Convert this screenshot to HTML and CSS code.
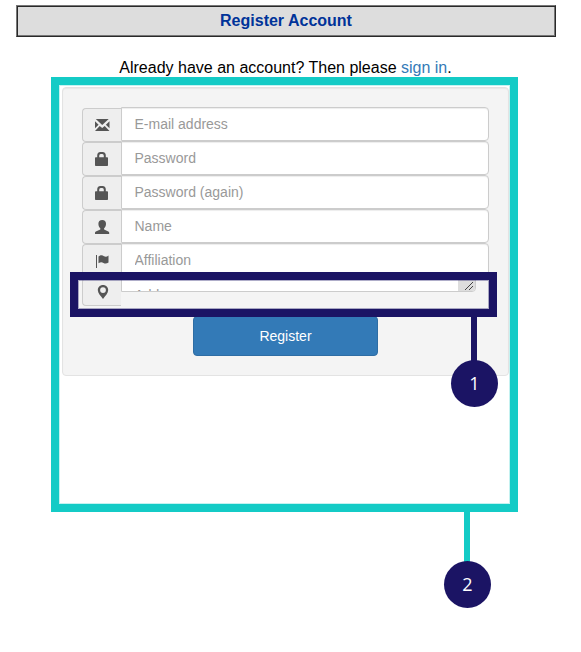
FILE: index.html
```html
<!DOCTYPE html>
<html lang="en">
<head>
<meta charset="utf-8">
<title>Register Account</title>
<link rel="stylesheet" href="styles.css">
</head>
<body>
<main class="page">
  <h1 class="title">Register Account</h1>
  <p class="signin">Already have an account? Then please <a href="#">sign in</a>.</p>
  <form class="panel">
    <div class="row">
      <span class="addon"><svg width="16" height="14" viewBox="0 0 16 14"><path d="M1.800 1h12.900L8.200 7zM1 3.200L4.600 6.700 1 10.200zM15.500 3.200L11.900 6.700l3.600 3.500zM5.700 8l2.500 2 2.500-2 4.800 5H1z"/></svg></span>
      <input class="field" type="text" placeholder="E-mail address">
    </div>
    <div class="row">
      <span class="addon"><svg width="16" height="14" viewBox="0 0 16 14"><path fill-rule="evenodd" d="M1 6q0-.8.8-.8h1.400V3.500Q3.200 0 6.400 0h2.200q3.200 0 3.200 3.500v1.700h1.400q.8 0 .8.800v7.200q0 .8-.8.8H1.800q-.8 0-.8-.8zM5.200 5.200h4.600V3.700q0-1.700-1.500-1.700H6.700q-1.500 0-1.500 1.700z"/></svg></span>
      <input class="field" type="text" placeholder="Password">
    </div>
    <div class="row">
      <span class="addon"><svg width="16" height="14" viewBox="0 0 16 14"><path fill-rule="evenodd" d="M1 6q0-.8.8-.8h1.400V3.500Q3.200 0 6.400 0h2.200q3.200 0 3.200 3.500v1.700h1.400q.8 0 .8.800v7.200q0 .8-.8.8H1.800q-.8 0-.8-.8zM5.200 5.200h4.600V3.700q0-1.700-1.500-1.700H6.700q-1.500 0-1.500 1.700z"/></svg></span>
      <input class="field" type="text" placeholder="Password (again)">
    </div>
    <div class="row">
      <span class="addon"><svg width="16" height="14" viewBox="0 0 16 14"><path d="M8.200 0c2.500 0 3.800 1.400 3.800 3.800 0 2-.8 3.500-1.900 4.500v1.200l4.200 2q.9.500.9 1.200V14H1v-1.300q0-.7.9-1.200l4.400-2V8.300C5.200 7.300 4.400 5.800 4.400 3.800 4.400 1.400 5.700 0 8.200 0z"/></svg></span>
      <input class="field" type="text" placeholder="Name">
    </div>
    <div class="row">
      <span class="addon"><svg width="16" height="14" viewBox="0 0 16 14"><path d="M2 1h1v13H2zM4.500 2.500c2.300-1.800 4-1.200 5.500-.3 1.500.8 2.800.6 4.500-.7v7c-1.800 1.300-3.500 1.300-5 .5-1.700-1-3-.9-5 .3z"/></svg></span>
      <input class="field" type="text" placeholder="Affiliation">
    </div>
    <div class="row row-address">
      <span class="addon"><svg width="16" height="14" viewBox="0 0 16 14"><path fill-rule="evenodd" d="M9 0c3 0 5.200 2.200 5.200 5 0 3-2.700 5.700-5.200 9-2.500-3.300-5.200-6-5.200-9C3.800 2.200 6 0 9 0zm0 2.200A2.900 2.900 0 1 0 9 8a2.900 2.900 0 0 0 0-5.800z"/></svg></span>
      <div class="address"><span>Address</span><svg class="grip" width="17" height="13" viewBox="0 0 17 13"><path d="M7 12l8-8M11 12l4-4"/></svg></div>
    </div>
    <button class="submit" type="button">Register</button>
  </form>
  <div class="frame frame-form"></div>
  <div class="frame frame-address"></div>
  <div class="stem stem-one"></div>
  <div class="badge badge-one">1</div>
  <div class="stem stem-two"></div>
  <div class="badge badge-two">2</div>
</main>
</body>
</html>
```
FILE: styles.css
```css
* { box-sizing: border-box; }
body {
  margin: 0;
  background: #fff;
  color: #000;
  font: 16px/20px "Liberation Sans", Arial, sans-serif;
}
.page {
  position: relative;
  height: 652px;
  padding: 5px 25px 0 16px;
  overflow: hidden;
}
.title {
  height: 32px;
  margin: 0;
  padding-top: 5px;
  border: 1px solid;
  border-color: #777 #292929 #292929 #777;
  box-shadow: inset 1px 1px #292929, inset -1px -1px #777;
  background: #ddd;
  color: #003399;
  font-size: 16px;
  line-height: 20px;
  text-align: center;
}
.signin {
  margin: 21px 0 0;
  padding-right: 1px;
  text-align: center;
}
.signin a { color: #337ab7; text-decoration: none; }
.panel {
  width: 447px;
  height: 289px;
  margin: 9px 0 0 46px;
  padding: 19px 19px 0 19px;
  border: 1px solid #e3e3e3;
  border-radius: 4px;
  background: #f4f4f4;
  box-shadow: inset 0 1px 1px rgba(0, 0, 0, .05);
}
.row { display: flex; height: 34px; }
.addon {
  display: flex;
  align-items: center;
  justify-content: center;
  width: 39px;
  height: 34px;
  margin-top: 1px;
  border: 1px solid #ccc;
  border-right: 0;
  border-radius: 4px 0 0 4px;
  background: #eee;
}
.addon svg { fill: #555; }
.field {
  width: 368px;
  height: 34px;
  margin: 0;
  padding: 6px 12px 6px 12.5px;
  border: 1px solid #ccc;
  border-radius: 0 4px 4px 0;
  background: #fff;
  box-shadow: inset 0 1px 1px rgba(0, 0, 0, .075);
  font: 14px/20px "Liberation Sans", Arial, sans-serif;
}
.field::placeholder { color: #999; opacity: 1; }
.row-address { height: 40px; }
.row-address .addon { height: 28px; }
.address {
  display: flex;
  justify-content: space-between;
  align-items: flex-end;
  width: 355px;
  height: 15px;
  padding-left: 12.5px;
  border: 1px solid #ccc;
  border-radius: 0 0 4px 0;
  background: #fff;
  color: #999;
  font-size: 14px;
  line-height: 20px;
  overflow: hidden;
}
.address span { height: 6px; }
.grip { background: #ddd; fill: none; stroke: #444; stroke-width: 1; }
.submit {
  display: block;
  width: 185px;
  height: 40px;
  margin: -1px 0 0 111px;
  padding: 0;
  border: 1px solid #2e6da4;
  border-radius: 4px;
  background: #337ab7;
  color: #fff;
  font: 14px/20px "Liberation Sans", Arial, sans-serif;
}
.frame { position: absolute; }
.frame-form {
  left: 51px;
  top: 77px;
  width: 467px;
  height: 435px;
  border: 8px solid #14cbc6;
  box-shadow: inset 0 0 0 1px rgba(20, 203, 198, .25);
}
.frame-address {
  left: 70px;
  top: 272px;
  width: 427px;
  height: 45px;
  border: 8px solid #1b1464;
  box-shadow: inset 0 0 0 1px rgba(27, 20, 100, .35);
}
.stem { position: absolute; width: 6px; }
.stem-one { left: 471px; top: 317px; height: 46px; background: #1b1464; }
.stem-two { left: 464px; top: 512px; height: 52px; background: #14cbc6; }
.badge {
  position: absolute;
  width: 47px;
  height: 47px;
  border-radius: 50%;
  background: #1b1464;
  color: #fff;
  font: 18px/47px "Open Sans", "Noto Sans", sans-serif;
  text-align: center;
}
.badge-one { left: 451px; top: 360px; }
.badge-two { left: 444px; top: 561px; }
```
